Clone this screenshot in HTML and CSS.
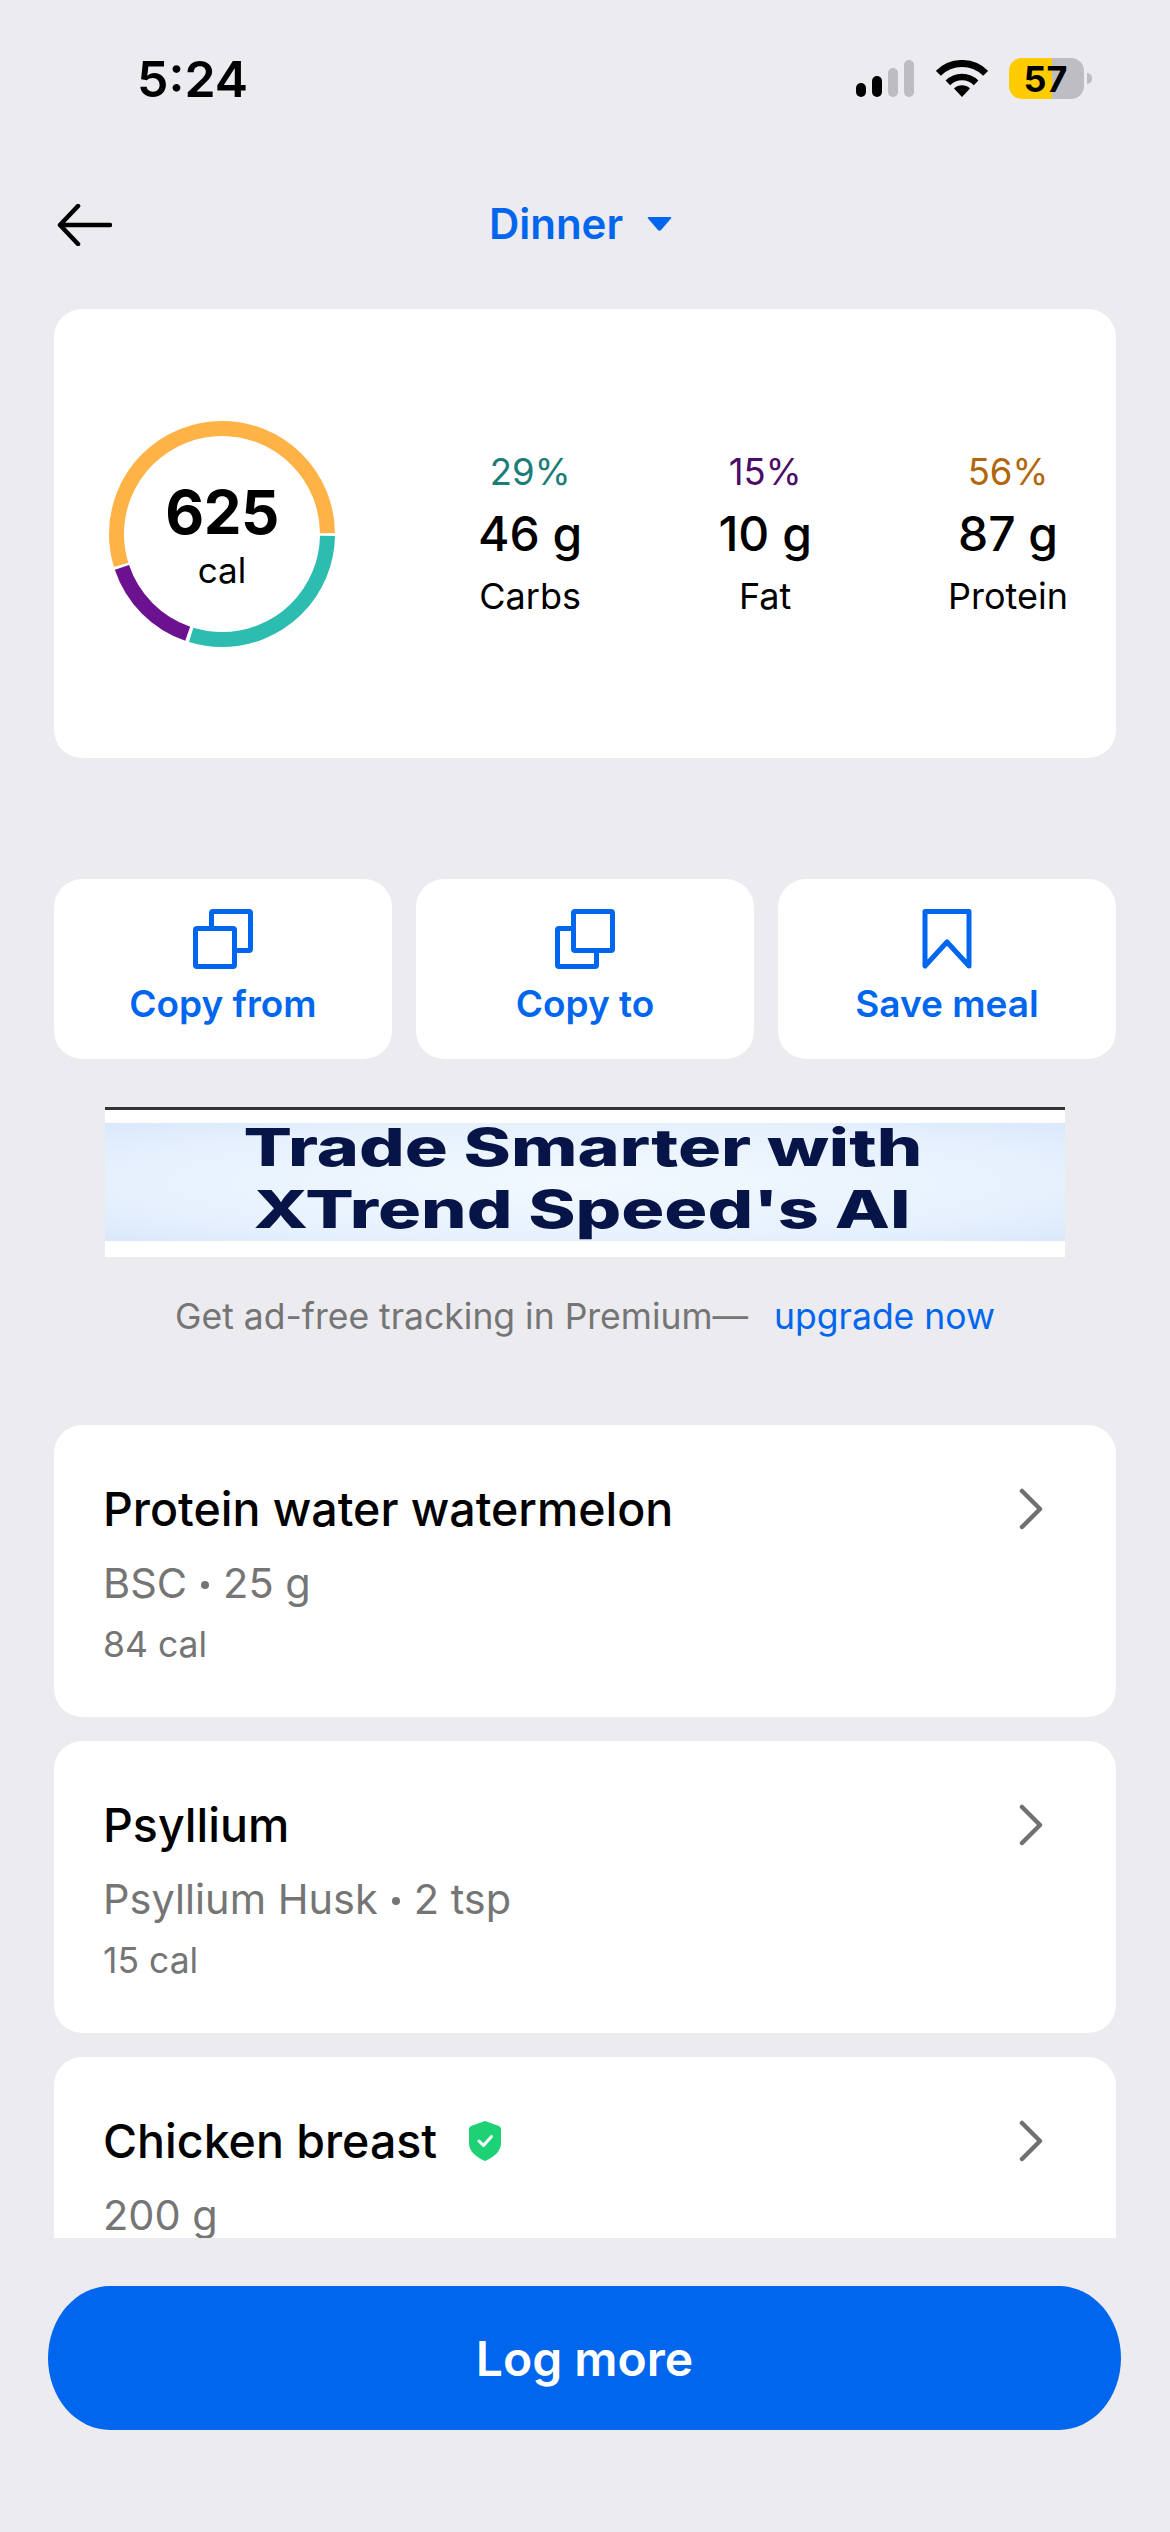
FILE: index.html
```html
<!DOCTYPE html>
<html lang="en">
<head>
<meta charset="utf-8">
<title>Dinner</title>
<link rel="stylesheet" href="styles.css">
</head>
<body>
<div class="page">
  <header class="status">
    <span class="time">5:24</span>
    <div class="status-icons">
      <svg class="signal" width="58" height="37" viewBox="0 0 58 37">
        <rect x="0" y="23" width="10" height="14" rx="5" fill="#000"/>
        <rect x="16" y="16" width="10" height="21" rx="5" fill="#000"/>
        <rect x="32" y="8" width="10" height="29" rx="5" fill="#bcbcc1"/>
        <rect x="48" y="0" width="10" height="37" rx="5" fill="#bcbcc1"/>
      </svg>
      <svg class="wifi" width="52" height="37" viewBox="0 0 52 37">
        <path d="M2.3 13.3A33.5 33.5 0 0 1 49.7 13.3" fill="none" stroke="#000" stroke-width="7"/>
        <path d="M11.9 22.9A20 20 0 0 1 40.1 22.9" fill="none" stroke="#000" stroke-width="6.5"/>
        <path d="M26 37L18 28.6A11.5 11.5 0 0 1 34 28.6Z" fill="#000"/>
      </svg>
      <div class="battery"><span class="battery-level">57</span><span class="battery-tip"></span></div>
    </div>
  </header>

  <nav class="nav">
    <svg class="back" width="55" height="42" viewBox="0 0 55 42">
      <path d="M21 2L3 21L21 40M3 21H53" fill="none" stroke="#000" stroke-width="4.5" stroke-linecap="round" stroke-linejoin="round"/>
    </svg>
    <div class="nav-title">
      <span>Dinner</span>
      <svg width="25" height="14" viewBox="0 0 25 14"><path d="M1 1.5Q0 0 2 0H23Q25 0 24 1.5L14 13Q12.500 14.500 11 13Z" fill="#0066ee"/></svg>
    </div>
  </nav>

  <main class="content">
    <section class="summary">
      <div class="ring">
        <svg width="226" height="226" viewBox="0 0 226 226">
          <circle class="arc arc-carbs" cx="113" cy="113" r="105.500" pathLength="360"/>
          <circle class="arc arc-fat" cx="113" cy="113" r="105.500" pathLength="360"/>
          <circle class="arc arc-protein" cx="113" cy="113" r="105.500" pathLength="360"/>
        </svg>
        <div class="ring-label">
          <span class="ring-value">625</span>
          <span class="ring-unit">cal</span>
        </div>
      </div>
      <div class="stats">
        <div class="stat">
          <span class="pct pct-carbs">29%</span>
          <span class="grams">46 g</span>
          <span class="macro">Carbs</span>
        </div>
        <div class="stat">
          <span class="pct pct-fat">15%</span>
          <span class="grams">10 g</span>
          <span class="macro">Fat</span>
        </div>
        <div class="stat">
          <span class="pct pct-protein">56%</span>
          <span class="grams">87 g</span>
          <span class="macro">Protein</span>
        </div>
      </div>
    </section>

    <section class="actions">
      <button class="action">
        <svg width="60" height="60" viewBox="0 0 60 60">
          <rect x="18.500" y="2.500" width="39" height="39" rx="1.500" fill="#fff" stroke="#0066ee" stroke-width="5"/>
          <rect x="2.500" y="19.500" width="39" height="38" rx="1.500" fill="#fff" stroke="#0066ee" stroke-width="5"/>
        </svg>
        <span>Copy from</span>
      </button>
      <button class="action">
        <svg width="60" height="60" viewBox="0 0 60 60">
          <rect x="2.500" y="19.500" width="39" height="38" rx="1.500" fill="#fff" stroke="#0066ee" stroke-width="5"/>
          <rect x="18.500" y="2.500" width="39" height="39" rx="1.500" fill="#fff" stroke="#0066ee" stroke-width="5"/>
        </svg>
        <span>Copy to</span>
      </button>
      <button class="action">
        <svg width="60" height="60" viewBox="0 0 60 60">
          <path d="M8 2.500H52V57L30 33L8 57Z" fill="#fff" stroke="#0066ee" stroke-width="5" stroke-linejoin="round"/>
        </svg>
        <span>Save meal</span>
      </button>
    </section>

    <aside class="ad">
      <div class="ad-art">
        <span>Trade Smarter with</span>
        <span>XTrend Speed's AI</span>
      </div>
    </aside>

    <p class="promo">Get ad-free tracking in Premium— <a class="promo-link">upgrade now</a></p>

    <section class="list">
      <article class="food">
        <div class="food-head">
          <h3 class="food-name">Protein water watermelon</h3>
          <svg class="chev" width="24" height="42" viewBox="0 0 24 42"><path d="M3 3L21 21L3 39" fill="none" stroke="#707070" stroke-width="4.500" stroke-linecap="round" stroke-linejoin="round"/></svg>
        </div>
        <p class="food-sub">BSC <i class="dot"></i> 25 g</p>
        <p class="food-cal">84 cal</p>
      </article>
      <article class="food">
        <div class="food-head">
          <h3 class="food-name">Psyllium</h3>
          <svg class="chev" width="24" height="42" viewBox="0 0 24 42"><path d="M3 3L21 21L3 39" fill="none" stroke="#707070" stroke-width="4.500" stroke-linecap="round" stroke-linejoin="round"/></svg>
        </div>
        <p class="food-sub">Psyllium Husk <i class="dot"></i> 2 tsp</p>
        <p class="food-cal">15 cal</p>
      </article>
      <article class="food">
        <div class="food-head">
          <h3 class="food-name">Chicken breast
            <svg class="shield" width="32" height="40" viewBox="0 0 32 40"><path d="M16 0L30 5Q32 6 32 8V22Q32 33 16 40Q0 33 0 22V8Q0 6 2 5Z" fill="#1dd275"/><path d="M10 20L14.500 24.500L22.500 15.500" fill="none" stroke="#fff" stroke-width="3" stroke-linecap="round" stroke-linejoin="round"/></svg>
          </h3>
          <svg class="chev" width="24" height="42" viewBox="0 0 24 42"><path d="M3 3L21 21L3 39" fill="none" stroke="#707070" stroke-width="4.500" stroke-linecap="round" stroke-linejoin="round"/></svg>
        </div>
        <p class="food-sub">200 g</p>
      </article>
    </section>
  </main>

  <footer class="footer">
    <button class="log-more">Log more</button>
  </footer>
</div>
</body>
</html>
```

FILE: styles.css
```css
* { box-sizing: border-box; }
html, body { margin: 0; padding: 0; }
body { background: #ebebf0; font-family: Inter, "Noto Sans", sans-serif; color: #000; }
.page { width: 1170px; height: 2532px; display: flex; flex-direction: column; overflow: hidden; }

.status { height: 157px; flex: none; display: flex; align-items: center; justify-content: space-between; padding: 0 86px 0 137px; }
.time { font-size: 50px; font-weight: 600; line-height: 1; }
.status-icons { display: flex; align-items: center; }
.wifi { margin-left: 22px; }
.battery { margin-left: 21px; width: 75px; height: 41px; border-radius: 13px; position: relative; background: linear-gradient(90deg, #ffcc00 0 43px, #bdbdc2 43px); display: flex; align-items: center; justify-content: center; }
.battery-level { font-size: 36px; font-weight: 700; line-height: 1; margin-right: 2px; }
.battery-tip { position: absolute; left: 78px; top: 15px; width: 5px; height: 11px; border-radius: 0 6px 6px 0; background: #bdbdc2; }

.nav { height: 136px; flex: none; display: grid; grid-template-columns: 1fr auto 1fr; align-items: center; padding: 0 57px; margin-bottom: 16px; }
.back { display: block; }
.nav-title { display: flex; align-items: center; gap: 24px; color: #0066ee; font-size: 42px; line-height: 50px; font-weight: 600; margin: 0 9px 2px 0; }

.content { flex: 1; min-height: 0; display: flex; flex-direction: column; padding: 0 54px; }

.summary { flex: none; height: 449px; background: #fff; border-radius: 28px; display: flex; align-items: center; padding: 0 48px 0 55px; }
.ring { width: 226px; height: 226px; flex: none; position: relative; }
.ring svg { display: block; }
.arc { fill: none; stroke-width: 15; }
.arc-carbs { stroke: #2dbcb0; stroke-dasharray: 106 254; stroke-dashoffset: -1; }
.arc-fat { stroke: #6c1190; stroke-dasharray: 52.500 307.500; stroke-dashoffset: -109; }
.arc-protein { stroke: #ffb245; stroke-dasharray: 196.500 163.500; stroke-dashoffset: -163; }
.ring-label { position: absolute; inset: 0; display: flex; flex-direction: column; align-items: center; justify-content: center; }
.ring-value { font-size: 60px; font-weight: 700; line-height: 72px; letter-spacing: -0.5px; }
.ring-unit { font-size: 35px; line-height: 44px; }

.stats { flex: 1; display: flex; justify-content: space-between; margin-left: 143px; }
.stat { display: flex; flex-direction: column; align-items: center; }
.pct { font-size: 36.500px; line-height: 62px; }
.pct-carbs { color: #1c7d78; }
.pct-fat { color: #4a0c66; }
.pct-protein { color: #b2660a; }
.grams { font-size: 48px; line-height: 62px; font-weight: 450; }
.macro { font-size: 36px; line-height: 62px; }

.actions { flex: none; display: flex; gap: 24px; margin-top: 121px; height: 180px; }
.action { flex: 1; background: #fff; border: 0; border-radius: 28px; display: flex; flex-direction: column; align-items: center; justify-content: flex-start; padding: 30px 0 0; color: #0066ee; font-family: inherit; font-size: 37px; font-weight: 600; }
.action svg { display: block; margin-bottom: 11px; }
.action span { line-height: 48px; }

.ad { flex: none; margin: 48px 51px 0; height: 150px; background: #fff; border-top: 3px solid #333; padding: 13px 0 16px; }
.ad-art { height: 118px; background: radial-gradient(ellipse at center, #f2f9ff 0%, #e6f1fd 70%, #d9e8fb 100%); display: flex; flex-direction: column; align-items: center; color: #071447; font-size: 52px; font-weight: 800; line-height: 62px; }
.ad-art span { transform: scaleX(1.38); white-space: nowrap; }
.ad-art span:first-child { margin-top: -6px; margin-right: 4px; }
.ad-art span:last-child { margin-right: 6px; }

.promo { flex: none; margin: 36px 0 0; text-align: center; font-size: 35.500px; line-height: 48px; color: #757575; }
.promo-link { color: #0066ee; margin-left: 16px; }

.list { flex: 1; min-height: 0; margin-top: 84px; display: flex; flex-direction: column; gap: 24px; overflow: hidden; }
.food { flex: none; height: 292px; background: #fff; border-radius: 28px; padding: 54px 73px 0 49px; }
.food-head { display: flex; align-items: center; justify-content: space-between; height: 60px; }
.food-name { margin: 0; font-size: 46.500px; font-weight: 450; line-height: 60px; display: flex; align-items: center; gap: 32px; }
.shield { display: block; }
.food-sub { margin: 14px 0 0; font-size: 41.500px; line-height: 60px; color: #757575; display: flex; align-items: center; gap: 14px; }
.dot { width: 8px; height: 8px; border-radius: 50%; background: #757575; margin-top: 4px; }
.food-cal { margin: 8px 0 0; font-size: 35.500px; line-height: 48px; color: #757575; }

.footer { flex: none; height: 294px; padding: 48px 49px 0 48px; }
.log-more { width: 100%; height: 144px; border: 0; background: #0066ee; border-radius: 62px / 72px; color: #fff; font-family: inherit; font-size: 48px; font-weight: 600; }
```
